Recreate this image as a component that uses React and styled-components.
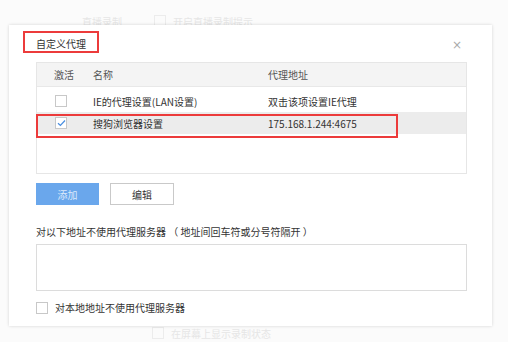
import React from 'react';
import styled, { createGlobalStyle } from 'styled-components';

const GlobalStyle = createGlobalStyle`
  html, body {
    margin: 0;
    padding: 0;
    background: #fff;
  }
  body {
    font-family: "Noto Sans CJK SC", "Noto Sans", sans-serif;
    font-size: 10px;
    color: #333;
  }
`;

const Page = styled.div`
  position: relative;
  width: 508px;
  height: 342px;
  overflow: hidden;
  background: #fbfbfb;
  display: flex;
  flex-direction: column;
  justify-content: space-between;
`;

const BackRow = styled.div`
  display: flex;
  align-items: center;
  gap: 32px;
  height: 14px;
  padding: ${props => props.top || 0}px 0 ${props => props.bottom || 0}px ${props => props.left}px;
  color: #e6e6e6;
  font-size: 10px;
`;

const BackCheck = styled.span`
  display: flex;
  align-items: center;
  gap: 7px;
`;

const FaintBox = styled.span`
  width: 10px;
  height: 10px;
  border: 1px solid #ececec;
`;

const Dialog = styled.div`
  position: absolute;
  left: 9px;
  top: 25px;
  width: 483px;
  height: 301px;
  box-sizing: border-box;
  background: #fff;
  box-shadow: 0 0 3px rgba(0, 0, 0, 0.16);
  padding: 0 25px 0 27px;
  display: flex;
  flex-direction: column;
`;

const TitleBar = styled.div`
  position: relative;
  display: flex;
  align-items: center;
  justify-content: space-between;
  height: 37px;
`;

const Title = styled.div`
  font-size: 10px;
  color: #333;
`;

const Mark = styled.div`
  position: absolute;
  border: 2px solid #ec3b3b;
  box-sizing: border-box;
  pointer-events: none;
  left: ${props => props.x}px;
  top: ${props => props.y}px;
  width: ${props => props.w}px;
  height: ${props => props.h}px;
`;

const Close = styled.span`
  color: #aaa;
  font-size: 12px;
  line-height: 1;
  margin-right: 5px;
  margin-top: 2px;
  font-family: "DejaVu Sans", sans-serif;
`;

const Table = styled.div`
  height: 112px;
  box-sizing: border-box;
  border: 1px solid #e6e6e6;
  display: flex;
  flex-direction: column;
`;

const Row = styled.div`
  position: relative;
  display: grid;
  grid-template-columns: 56px 175px 1fr;
  align-items: center;
  height: ${props => (props.head ? 23 : 22)}px;
  background: ${props => (props.head ? '#f4f4f4' : props.active ? '#ececec' : 'transparent')};
  border-bottom: ${props => (props.head ? '1px solid #e8e8e8' : 'none')};
  margin-bottom: ${props => (props.head ? 3 : 0)}px;
  color: ${props => (props.head ? '#555' : '#333')};
`;

const Cell = styled.div`
  padding-left: ${props => props.pad || 0}px;
  display: flex;
  align-items: center;
  white-space: nowrap;
`;

const Box = styled.span`
  display: inline-flex;
  align-items: center;
  justify-content: center;
  width: 12px;
  height: 12px;
  box-sizing: border-box;
  border: 1px solid #c8c8c8;
  background: #fff;
`;

const Buttons = styled.div`
  display: flex;
  gap: 11px;
  margin-top: 9px;
`;

const Button = styled.button`
  width: ${props => (props.primary ? 63 : 64)}px;
  height: 22px;
  box-sizing: border-box;
  font-family: inherit;
  font-size: 10px;
  border: 1px solid ${props => (props.primary ? '#6aa7ec' : '#c9c9c9')};
  background: ${props => (props.primary ? '#6aa7ec' : '#fff')};
  color: ${props => (props.primary ? '#dbe9fb' : '#333')};
  padding: 0;
`;

const Label = styled.div`
  margin-top: 20px;
  height: 13px;
  line-height: 13px;
  color: #333;
  white-space: pre;
`;

const TextArea = styled.div`
  margin-top: 6px;
  height: 47px;
  box-sizing: border-box;
  border: 1px solid #dcdcdc;
`;

const CheckLine = styled.label`
  display: flex;
  align-items: center;
  gap: 7px;
  margin-top: 9px;
  color: #333;
`;

function Check({ checked }) {
  return (
    <Box>
      {checked && (
        <svg width="9" height="8" viewBox="0 0 9 8">
          <path d="M1 4.2 L3.4 6.4 L8 1.5" fill="none" stroke="#4a8fe0" strokeWidth="1.3" />
        </svg>
      )}
    </Box>
  );
}

const rows = [
  { name: 'IE的代理设置(LAN设置)', addr: '双击该项设置IE代理', checked: false },
  { name: '搜狗浏览器设置', addr: '175.168.1.244:4675', checked: true },
];

export default function App() {
  return (
    <Page>
      <GlobalStyle />
      <BackRow top={14} left={82}>
        <span>直播录制</span>
        <BackCheck>
          <FaintBox />
          <span>开启直播录制提示</span>
        </BackCheck>
      </BackRow>
      <BackRow bottom={2} left={152}>
        <BackCheck>
          <FaintBox />
          <span>在屏幕上显示录制状态</span>
        </BackCheck>
      </BackRow>
      <Dialog>
        <TitleBar>
          <Mark x={-13} y={6} w={76} h={22} />
          <Title>自定义代理</Title>
          <Close>×</Close>
        </TitleBar>
        <Table>
          <Row head>
            <Cell pad={17}>激活</Cell>
            <Cell>名称</Cell>
            <Cell>代理地址</Cell>
          </Row>
          {rows.map(r => (
            <Row key={r.name} active={r.checked}>
              <Cell pad={18}>
                <Check checked={r.checked} />
              </Cell>
              <Cell>{r.name}</Cell>
              <Cell>{r.addr}</Cell>
              {r.checked && <Mark x={-1} y={2} w={362} h={24} />}
            </Row>
          ))}
        </Table>
        <Buttons>
          <Button primary>添加</Button>
          <Button>编辑</Button>
        </Buttons>
        <Label>对以下地址不使用代理服务器 （ 地址间回车符或分号符隔开 ）</Label>
        <TextArea />
        <CheckLine>
          <Check />
          <span>对本地地址不使用代理服务器</span>
        </CheckLine>
      </Dialog>
    </Page>
  );
}
